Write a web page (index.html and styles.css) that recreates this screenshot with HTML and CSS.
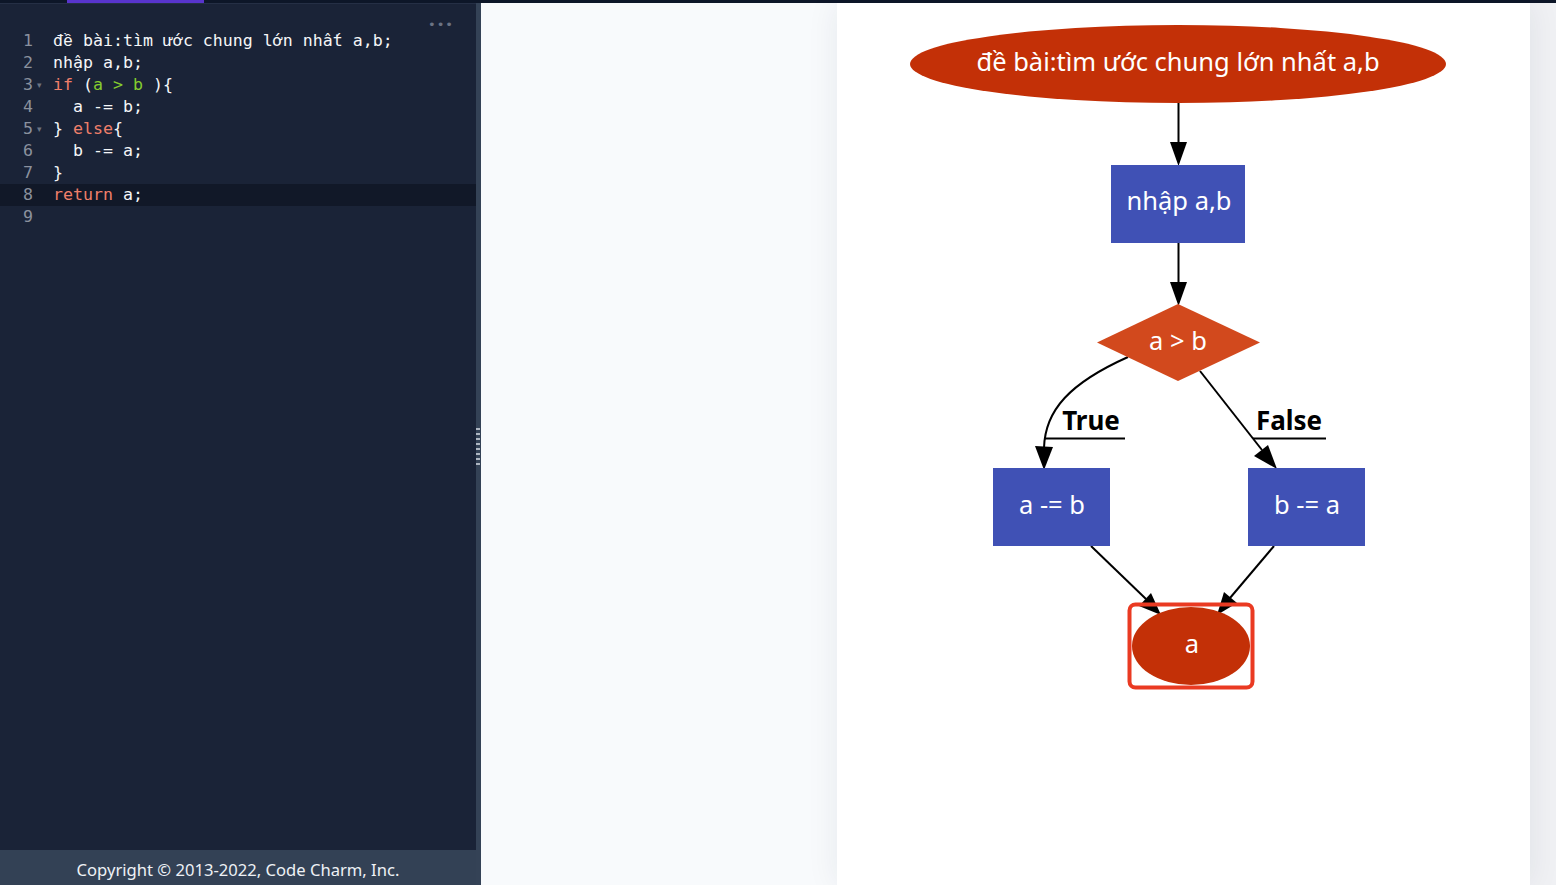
FILE: index.html
```html
<!DOCTYPE html>
<html lang="vi">
<head>
<meta charset="utf-8">
<title>Code Charm</title>
<link rel="stylesheet" href="styles.css">
</head>
<body>
<div class="topbar"><div class="tab"></div></div>
<div class="main">
  <div class="left">
    <div class="editor">
      <div class="dots">•••</div>
      <div class="line"><span class="gut">1</span><span class="fold"></span><span class="code">đ<span class="vn">&#x1EC1;</span> bài:tìm ước chung lớn nhất a,b;</span></div>
      <div class="line"><span class="gut">2</span><span class="fold"></span><span class="code">nhập a,b;</span></div>
      <div class="line"><span class="gut">3</span><span class="fold">▾</span><span class="code"><span class="kw">if</span> (<span class="gr">a &gt; b</span> ){</span></div>
      <div class="line"><span class="gut">4</span><span class="fold"></span><span class="code">  a -= b;</span></div>
      <div class="line"><span class="gut">5</span><span class="fold">▾</span><span class="code">} <span class="kw">else</span>{</span></div>
      <div class="line"><span class="gut">6</span><span class="fold"></span><span class="code">  b -= a;</span></div>
      <div class="line"><span class="gut">7</span><span class="fold"></span><span class="code">}</span></div>
      <div class="line active"><span class="gut">8</span><span class="fold"></span><span class="code"><span class="kw">return</span> a;</span></div>
      <div class="line"><span class="gut">9</span><span class="fold"></span><span class="code"></span></div>
    </div>
    <div class="footer">Copyright © 2013-2022, Code Charm, Inc.</div>
  </div>
  <div class="divider"><div class="grip"></div></div>
  <div class="right">
    <div class="card">
      <svg class="chart" width="693" height="882" viewBox="837 3 693 882" xmlns="http://www.w3.org/2000/svg">
        <g class="edges">
          <line x1="1178.5" y1="103" x2="1178.5" y2="143"/>
          <polygon points="1170,142 1187,142 1178.5,166"/>
          <line x1="1178.5" y1="243" x2="1178.5" y2="283"/>
          <polygon points="1170,282 1187,282 1178.5,306"/>
          <path d="M1128,357 C1070,383 1045,410 1044,448" fill="none"/>
          <polygon points="1035,446 1053,447 1044,470"/>
          <line x1="1200" y1="371" x2="1262" y2="450"/>
          <polygon points="1254,456 1268,445 1277,469"/>
          <line x1="1091" y1="546" x2="1146" y2="599"/>
          <polygon points="1139,606 1151,593 1161,615"/>
          <line x1="1274" y1="546" x2="1230" y2="598"/>
          <polygon points="1224,592 1237,603 1217,615"/>
          <line x1="1044" y1="438.5" x2="1125" y2="438.5"/>
          <line x1="1253" y1="438.5" x2="1326" y2="438.5"/>
        </g>
        <ellipse class="term" cx="1178" cy="64" rx="268" ry="39"/>
        <text class="nt" x="1178" y="71">đ&#x1EC1; bài:tìm ước chung lớn nhất a,b</text>
        <rect class="proc" x="1111" y="165" width="134" height="78"/>
        <text class="nt" x="1179" y="210">nhập a,b</text>
        <polygon class="dec" points="1178,304 1260,342.5 1178,381 1097,342.5"/>
        <text class="nt" x="1178" y="350">a &gt; b</text>
        <text class="lbl" x="1091" y="430">True</text>
        <text class="lbl" x="1289" y="430">False</text>
        <rect class="proc" x="993" y="468" width="117" height="78"/>
        <text class="nt" x="1052" y="514">a -= b</text>
        <rect class="proc" x="1248" y="468" width="117" height="78"/>
        <text class="nt" x="1307" y="514">b -= a</text>
        <ellipse class="term" cx="1191" cy="646" rx="59" ry="39"/>
        <text class="nt" x="1192" y="653">a</text>
        <rect class="sel" x="1129.5" y="604.5" width="123" height="83" rx="6"/>
      </svg>
    </div>
  </div>
</div>
</body>
</html>
```

FILE: styles.css
```css
* { box-sizing: border-box; }
html, body { margin: 0; padding: 0; }
body {
  width: 1556px;
  height: 885px;
  overflow: hidden;
  background: #f8fafc;
  font-family: "Noto Sans", "Open Sans", sans-serif;
  display: flex;
  flex-direction: column;
}
.topbar {
  height: 3px;
  background: #0d1628;
  flex: none;
  padding-left: 67px;
}
.tab {
  width: 137px;
  height: 3px;
  background: #5834cc;
}
.main {
  flex: 1;
  display: flex;
  min-height: 0;
}
.left {
  width: 476px;
  background: #1a2337;
  display: flex;
  flex-direction: column;
  border-top: 1px solid #252f45;
}
.editor {
  flex: 1;
  padding-top: 26px;
  position: relative;
  font-family: "DejaVu Sans Mono", "Liberation Mono", monospace;
  font-size: 16.6px;
  color: #f5f6f8;
}
.vn {
  font-family: "Liberation Mono", monospace;
  display: inline-block;
  width: 10px;
  text-align: center;
}
.dots {
  position: absolute;
  right: 22px;
  top: 13px;
  font-size: 13px;
  letter-spacing: 1px;
  color: #6b7384;
  font-family: "DejaVu Sans", sans-serif;
}
.line {
  height: 22px;
  line-height: 22px;
  display: flex;
  white-space: pre;
}
.line.active { background: #111828; }
.gut {
  width: 33px;
  text-align: right;
  color: #8a919e;
  flex: none;
}
.fold {
  width: 20px;
  flex: none;
  font-size: 9px;
  color: #6d7482;
  padding-left: 4px;
  font-family: "DejaVu Sans", sans-serif;
}
.kw { color: #ef7f6a; }
.gr { color: #84cc2e; }
.footer {
  height: 35px;
  flex: none;
  background: #334155;
  color: #eef1f5;
  font-family: "Noto Sans", "Open Sans", sans-serif;
  font-size: 16.6px;
  display: flex;
  align-items: center;
  justify-content: center;
  padding-top: 3px;
}
.divider {
  width: 5px;
  background: #344256;
  display: flex;
  align-items: center;
  flex: none;
}
.grip {
  width: 4px;
  height: 38px;
  margin-top: 6px;
  background: repeating-linear-gradient(to bottom, #aeb6c2 0 2px, transparent 2px 5px);
}
.right {
  flex: 1;
  display: flex;
  padding-left: 356px;
  background: linear-gradient(to right, #f8fafc 0, #f8fafc 1049px, #f0f1f4 1049px);
}
.card {
  width: 693px;
  background: #ffffff;
  box-shadow: 0 0 30px rgba(30, 41, 59, 0.08);
}
.chart { display: block; }
.edges line, .edges path { stroke: #000; stroke-width: 2; }
.edges polygon { fill: #000; }
.term { fill: #c33007; }
.proc { fill: #4051b5; }
.dec { fill: #d2491d; }
.nt {
  fill: #ffffff;
  font-family: "Noto Sans", "Open Sans", sans-serif;
  font-size: 25.5px;
  text-anchor: middle;
}
.lbl {
  fill: #000;
  font-family: "Noto Sans", "Open Sans", sans-serif;
  font-size: 26px;
  font-weight: bold;
  text-anchor: middle;
}
.sel { fill: none; stroke: #ea3a22; stroke-width: 4; }
```
